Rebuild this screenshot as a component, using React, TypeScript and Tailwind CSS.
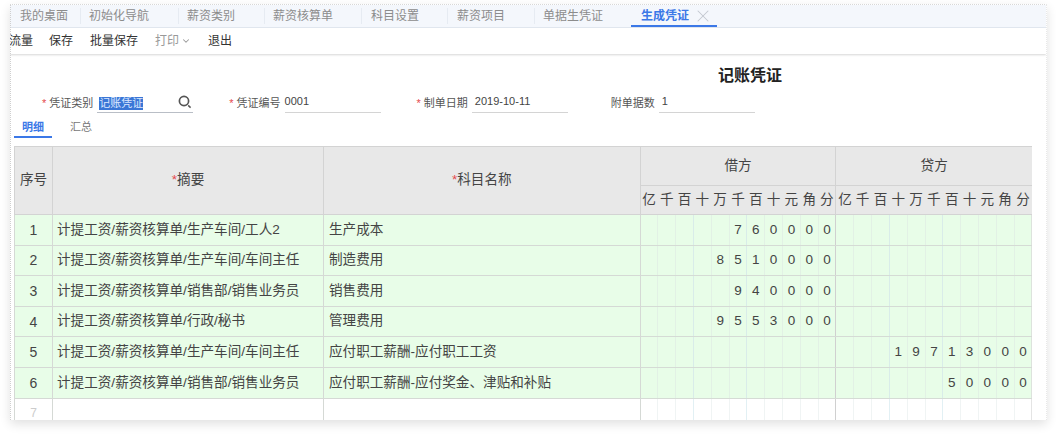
import { ChevronDown, X } from "lucide-react";

const tabs = [
  { label: "我的桌面", cls: "pl-[10px] pr-3" },
  { label: "初始化导航", cls: "pl-2 pr-[29px] border-l border-[#e6ebf2]" },
  { label: "薪资类别", cls: "pl-2 pr-[29px] border-l border-[#e6ebf2]" },
  { label: "薪资核算单", cls: "pl-2 pr-7 border-l border-[#e6ebf2]" },
  { label: "科目设置", cls: "pl-[9px] pr-7 border-l border-[#e6ebf2]" },
  { label: "薪资项目", cls: "pl-[9px] pr-[29px] border-l border-[#e6ebf2]" },
  { label: "单据生凭证", cls: "pl-2 pr-7 border-l border-[#e6ebf2]" },
];

const digitUnits = ["亿", "千", "百", "十", "万", "千", "百", "十", "元", "角", "分"];

const rows = [
  { no: "1", summary: "计提工资/薪资核算单/生产车间/工人2", subject: "生产成本", debit: "760000", credit: "" },
  { no: "2", summary: "计提工资/薪资核算单/生产车间/车间主任", subject: "制造费用", debit: "8510000", credit: "" },
  { no: "3", summary: "计提工资/薪资核算单/销售部/销售业务员", subject: "销售费用", debit: "940000", credit: "" },
  { no: "4", summary: "计提工资/薪资核算单/行政/秘书", subject: "管理费用", debit: "9553000", credit: "" },
  { no: "5", summary: "计提工资/薪资核算单/生产车间/车间主任", subject: "应付职工薪酬-应付职工工资", debit: "", credit: "19713000" },
  { no: "6", summary: "计提工资/薪资核算单/销售部/销售业务员", subject: "应付职工薪酬-应付奖金、津贴和补贴", debit: "", credit: "50000" },
];

function Req() {
  return <span className="mr-[3px] text-[11px] text-[#e5484d]">*</span>;
}

function Field({ label, required, value, className, valueClass }: { label: string; required?: boolean; value: string; className: string; valueClass?: string }) {
  return (
    <div className={`flex items-center ${className}`}>
      <span className="whitespace-nowrap text-[11px] text-[#555]">
        {required && <Req />}
        {label}
      </span>
      <div className={`ml-1 h-[19px] w-[96px] border-b border-[#d4d4d4] text-[11px] leading-[15px] text-[#444] ${valueClass ?? "pl-[3px]"}`}>
        {value}
      </div>
    </div>
  );
}

function SearchIcon() {
  return (
    <svg viewBox="0 0 14 14" className="mb-[2px] h-[14px] w-[14px] text-[#555]" fill="none" stroke="currentColor">
      <circle cx="6" cy="6" r="4.6" strokeWidth="1.7" />
      <path d="M10.2 10.4 12.6 12.6" strokeWidth="1.5" />
    </svg>
  );
}

// 金额格子：一个数字一格，靠右对齐
function DigitCells({ value, last }: { value: string; last?: boolean }) {
  const cells = value.padStart(11, " ").split("");
  return (
    <>
      {cells.map((c, i) => (
        <td
          key={i}
          className={`border-b border-[#d5dbd5] p-0 text-center text-[13.5px] text-[#444] ${
            i === 10
              ? last
                ? "border-r border-r-[#dde3dd]"
                : "border-r border-r-[#d0d0d0]"
              : i === 2 || i === 5
                ? "border-r border-r-[#d9ece9]"
                : "border-r border-r-[#e2f1e5]"
          }`}
        >
          {c.trim()}
        </td>
      ))}
    </>
  );
}

function EmptyCells({ last }: { last?: boolean }) {
  return (
    <>
      {digitUnits.map((_, i) => (
        <td
          key={i}
          className={
            i === 10
              ? last
                ? "border-r border-r-[#e4e4e4]"
                : "border-r border-r-[#d0d0d0]"
              : i === 2 || i === 5
                ? "border-r border-r-[#e2f0f4]"
                : "border-r border-r-[#f0f4f4]"
          }
        />
      ))}
    </>
  );
}

export default function App() {
  return (
    <div className="h-[435px] w-[1056px] overflow-hidden bg-white pt-1 pl-[10px] font-['Liberation_Sans','Noto_Sans_CJK_SC',sans-serif]">
      <div className="relative flex h-[416px] w-[1037px] flex-col overflow-hidden border-t border-r border-dotted border-t-[#d8d8d8] border-r-[#e8e8e8] bg-white shadow-[0_4px_10px_rgba(0,0,0,0.12)]">
        <div className="absolute inset-y-0 left-0 border-l border-dotted border-[#cfcfcf]" />

        {/* 页签 */}
        <div className="flex h-[23px] shrink-0 items-stretch border-b border-[#e3e9f1] bg-[#f4f7fc] text-xs text-[#8c8c8c]">
          {tabs.map((t) => (
            <div key={t.label} className={`my-[3px] flex items-center whitespace-nowrap ${t.cls}`}>
              {t.label}
            </div>
          ))}
          <div className="flex w-[86px] items-center border-b-2 border-[#3b78e7] pt-[2px] pl-[10px] font-bold text-[#3b78e7]">
            生成凭证
            <X className="ml-1 h-5 w-5 text-[#c2c8d0]" strokeWidth={1.25} />
          </div>
        </div>

        {/* 工具栏 */}
        <div className="flex h-[26px] shrink-0 items-center gap-[17px] text-xs text-[#333] shadow-[0_1px_2px_rgba(0,0,0,0.16)]">
          <span className="-ml-[1px] -mr-[1px]">流量</span>
          <span>保存</span>
          <span>批量保存</span>
          <span className="flex items-center text-[#999]">
            打印
            <ChevronDown className="ml-[2px] h-[10px] w-[10px]" strokeWidth={2.5} />
          </span>
          <span>退出</span>
        </div>

        {/* 标题 */}
        <div className="shrink-0 pt-3 pr-[264px] text-right text-base leading-[20px] font-bold text-[#222]">记账凭证</div>

        {/* 表单 */}
        <div className="mt-2 flex h-6 shrink-0 items-start text-[11px]">
          <div className="ml-8 flex items-center">
            <span className="whitespace-nowrap text-[#555]">
              <Req />
              凭证类别
            </span>
            <div className="ml-1 flex h-[19px] w-[96px] items-center justify-between border-b border-[#b9bec6] pr-[1px] pl-[2px]">
              <span className="bg-[#3a76d6] text-[11px] leading-[13px] text-[#dce8ff]">记账凭证</span>
              <SearchIcon />
            </div>
          </div>
          <Field className="ml-9" label="凭证编号" required value="0001" valueClass="pl-0 leading-[13px] font-medium" />
          <Field className="ml-9" label="制单日期" required value="2019-10-11" />
          <Field className="ml-[43px]" label="附单据数" value="1" />
        </div>

        {/* 明细 / 汇总 */}
        <div className="ml-1 flex h-[19px] shrink-0 items-start text-[11px]">
          <div className="box-content h-[17px] w-[38px] border-b-2 border-[#3b78e7] pt-[1px] text-center font-bold text-[#3b78e7]">明细</div>
          <div className="ml-[18px] pt-[1px] text-[#777]">汇总</div>
        </div>

        {/* 凭证表格 */}
        <div className="mt-[9px] ml-1 w-[1018px] shrink-0">
          <table className="w-[1017.5px] table-fixed border-collapse text-[13.6px] text-[#444]">
            <colgroup>
              <col className="w-[38px]" />
              <col className="w-[271px]" />
              <col className="w-[316.5px]" />
              {Array.from({ length: 22 }).map((_, i) => (
                <col key={i} className="w-[17.82px]" />
              ))}
            </colgroup>
            <thead>
              <tr className="h-[39px] bg-[#e8e8e8]">
                <th rowSpan={2} className="border border-[#d3d3d3] p-0 font-normal">序号</th>
                <th rowSpan={2} className="border border-[#d3d3d3] font-normal">
                  <span className="text-[#e5484d]">*</span>摘要
                </th>
                <th rowSpan={2} className="border border-[#d3d3d3] font-normal">
                  <span className="text-[#e5484d]">*</span>科目名称
                </th>
                <th colSpan={11} className="border border-[#d3d3d3] font-normal">借方</th>
                <th colSpan={11} className="border-y border-l border-[#d3d3d3] font-normal">贷方</th>
              </tr>
              <tr className="h-[29px] bg-[#e8e8e8]">
                {[...digitUnits, ...digitUnits].map((u, i) => (
                  <th
                    key={i}
                    className={`border-b border-[#d3d3d3] p-0 font-normal whitespace-nowrap ${i === 10 ? "border-r" : ""}`}
                  >
                    {u}
                  </th>
                ))}
              </tr>
            </thead>
            <tbody>
              {rows.map((r) => (
                <tr key={r.no} className="h-[30.6px] bg-[#e8fde8]">
                  <td className="border-x border-b border-[#d5d9d5] text-center text-sm">{r.no}</td>
                  <td className="truncate border-r border-b border-[#d5d9d5] pl-1">{r.summary}</td>
                  <td className="truncate border-r border-b border-[#d5d9d5] pl-[5px]">{r.subject}</td>
                  <DigitCells value={r.debit} />
                  <DigitCells value={r.credit} last />
                </tr>
              ))}
              <tr className="h-[30px]">
                <td className="border-x border-[#d5d9d5] text-center text-xs text-[#ccc]">7</td>
                <td className="border-r border-[#d5d9d5]" />
                <td className="border-r border-[#d5d9d5]" />
                <EmptyCells />
                <EmptyCells last />
              </tr>
            </tbody>
          </table>
        </div>
      </div>
    </div>
  );
}
